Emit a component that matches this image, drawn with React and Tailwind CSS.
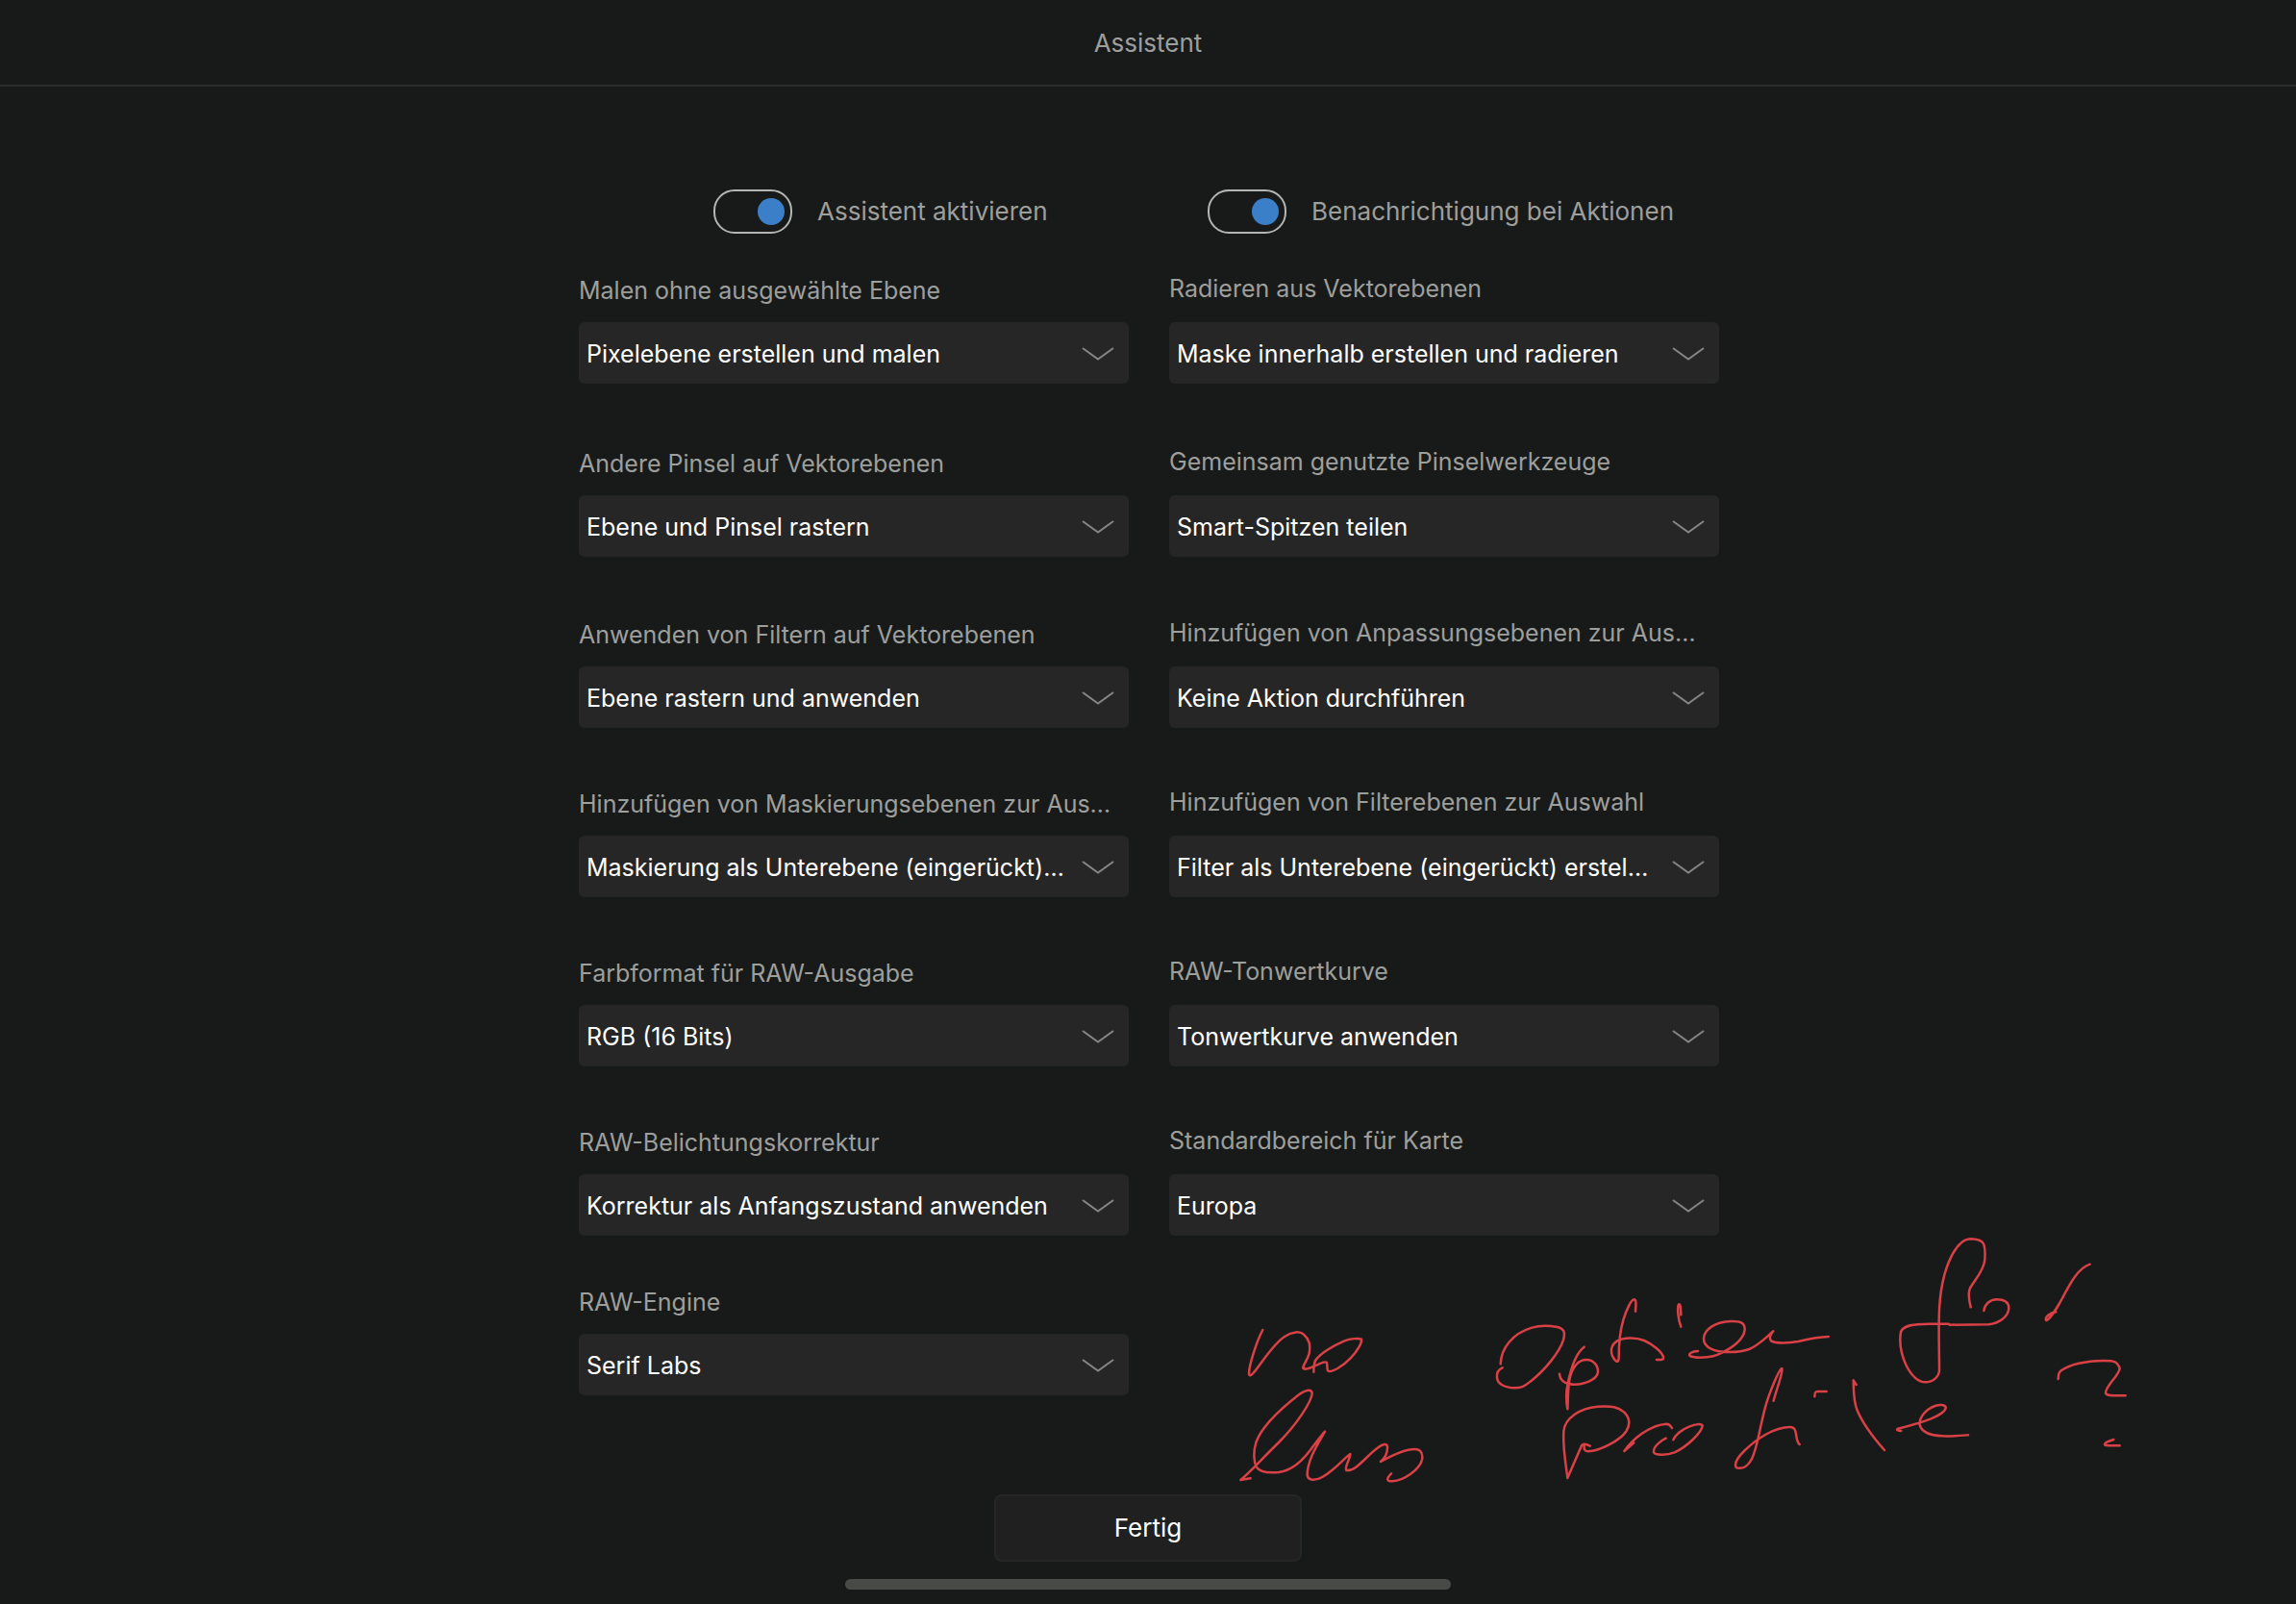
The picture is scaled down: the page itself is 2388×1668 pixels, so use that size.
import React, { useId } from "react";

const switches = [
  { label: "Assistent aktivieren", inset: "pl-[140px]" },
  { label: "Benachrichtigung bei Aktionen", inset: "pl-10" },
];

const rows = [
  {
    space: "mt-10",
    fields: [
      ["Malen ohne ausgewählte Ebene", "Pixelebene erstellen und malen"],
      ["Radieren aus Vektorebenen", "Maske innerhalb erstellen und radieren"],
    ],
  },
  {
    space: "mt-16",
    fields: [
      ["Andere Pinsel auf Vektorebenen", "Ebene und Pinsel rastern"],
      ["Gemeinsam genutzte Pinselwerkzeuge", "Smart-Spitzen teilen"],
    ],
  },
  {
    space: "mt-[62px]",
    fields: [
      ["Anwenden von Filtern auf Vektorebenen", "Ebene rastern und anwenden"],
      ["Hinzufügen von Anpassungsebenen zur Aus…", "Keine Aktion durchführen"],
    ],
  },
  {
    space: "mt-15",
    fields: [
      ["Hinzufügen von Maskierungsebenen zur Aus…", "Maskierung als Unterebene (eingerückt)…"],
      ["Hinzufügen von Filterebenen zur Auswahl", "Filter als Unterebene (eingerückt) erstel…"],
    ],
  },
  {
    space: "mt-15",
    fields: [
      ["Farbformat für RAW-Ausgabe", "RGB (16 Bits)"],
      ["RAW-Tonwertkurve", "Tonwertkurve anwenden"],
    ],
  },
  {
    space: "mt-15",
    fields: [
      ["RAW-Belichtungskorrektur", "Korrektur als Anfangszustand anwenden"],
      ["Standardbereich für Karte", "Europa"],
    ],
  },
  {
    space: "mt-[50px]",
    fields: [["RAW-Engine", "Serif Labs"]],
  },
];

function Switch({ label, inset }) {
  const id = useId();
  return (
    <div className={`flex items-center gap-[26px] ${inset}`}>
      <input
        id={id}
        type="checkbox"
        role="switch"
        defaultChecked
        className="flex h-[46px] w-[82px] shrink-0 appearance-none items-center rounded-[22px] border-2 border-[#b4b5b4] px-1.5 before:block before:size-7 before:rounded-full before:bg-[#6b6c6b] checked:justify-end checked:before:bg-[#3a7fc8]"
      />
      <label htmlFor={id} className="whitespace-nowrap">
        {label}
      </label>
    </div>
  );
}

function Field({ label, value, labelSpace }) {
  const id = useId();
  return (
    <div className="flex min-w-0 flex-col text-[25px]">
      <label htmlFor={id} className={`h-[52px] whitespace-nowrap ${labelSpace}`}>
        {label}
      </label>
      <div className="grid items-center">
        <select
          id={id}
          defaultValue={value}
          className="col-start-1 row-start-1 h-16 w-full appearance-none rounded-md bg-[#262626] pt-0.5 pr-12 pl-2 text-white"
        >
          <option value={value}>{value}</option>
        </select>
        <svg
          viewBox="0 0 36 16"
          className="pointer-events-none col-start-1 row-start-1 mr-3.5 h-4 w-9 justify-self-end"
          fill="none"
          stroke="#868686"
          strokeWidth="2"
          aria-hidden="true"
        >
          <path d="M2 3 L18 14.500 L34 3" />
        </svg>
      </div>
    </div>
  );
}

function Handwriting() {
  return (
    <svg
      viewBox="1280 1270 940 290"
      className="pointer-events-none absolute top-[1270px] left-1/2 ml-[86px] h-[290px] w-[940px]"
      fill="none"
      stroke="#d94146"
      strokeWidth="7.500"
      strokeLinecap="round"
      strokeLinejoin="round"
      aria-hidden="true"
    >
      <g transform="translate(1270 1270) scale(0.33333)">
        <path d="M130 339C112 372 88 446 87 474C87 484 93 482 100 474C125 446 160 385 198 360C222 344 246 342 258 353C276 368 280 388 275 412C270 434 256 446 256 458C262 466 280 456 300 448C313 442 324 436 329 440C333 448 329 463 334 467C346 472 378 454 404 427C428 402 440 378 438 368C428 364 403 366 385 373C350 388 308 413 294 435C289 446 289 456 289 470" />
        <path d="M92 802L61 807C90 784 130 738 180 690C235 635 285 560 284 535C281 522 262 526 240 543C180 590 125 645 109 690C100 720 102 750 110 766C120 782 150 786 180 783C220 778 255 745 279 713C300 685 315 665 324 656C306 688 268 745 269 792C271 808 288 808 305 803C345 788 380 742 403 726C404 740 384 765 391 777C420 782 450 735 490 706C505 694 517 692 519 703C520 725 512 738 498 750C530 732 575 711 605 711C625 711 630 728 627 744C620 775 570 808 535 811C512 812 518 800 531 787" />
      </g>
      <g transform="translate(1540 1330) scale(0.33333)">
        <path d="M62 265C64 215 100 170 160 152C185 144 215 145 240 150C262 156 264 168 258 190C245 230 200 285 155 320C135 337 125 340 105 340C75 339 52 327 51 308C49 292 56 282 68 277" />
        <path d="M323 212C295 232 280 285 271 330C265 360 268 390 271 406C273 380 271 350 277 315C285 275 305 252 330 252C352 252 367 270 366 290C364 313 325 330 290 329C262 328 247 315 246 296" />
        <path d="M483 101C484 85 487 65 479 64C470 64 455 95 445 128C434 165 431 210 431 245C431 263 422 259 414 246C402 225 408 205 425 194C445 182 485 182 510 192C540 205 565 228 570 243C571 254 562 252 549 252" />
        <path d="M625 149C617 130 612 90 618 79C624 76 624 95 625 112" />
        <path d="M678 225C660 226 647 233 653 240C670 248 715 246 740 236C785 217 822 188 824 158C825 135 808 131 780 132C735 133 697 156 696 186C696 215 730 228 775 228C800 228 820 226 838 219C870 205 890 182 913 163C903 172 900 185 906 193C920 202 965 200 990 195C1025 187 1050 181 1085 180" />
        <path d="M341 521C325 512 316 514 313 524L271 621C265 570 256 530 259 475C262 435 310 402 365 398C410 395 430 400 448 416C466 434 466 455 455 474C435 505 370 537 335 538C323 538 322 530 323 519" />
        <path d="M478 511L448 537C475 498 530 455 580 452C591 453 592 458 597 465" />
        <path d="M578 497C560 505 537 525 540 541C545 550 580 551 605 541C645 523 690 478 692 458C690 450 670 453 652 460C628 469 607 487 601 502" />
        <path d="M914 380C922 345 945 290 940 279C932 280 900 355 888 400C868 475 860 545 842 568C830 588 812 593 798 589C790 578 800 558 825 534C860 500 915 462 965 462C982 462 982 475 985 490C987 505 990 512 995 516" />
        <path d="M1042 367C1042 355 1044 351 1051 351L1079 351" />
      </g>
      <g transform="translate(1900 1270) scale(0.33333)">
        <path d="M449 268C444 248 439 225 447 209C460 185 490 155 493 120C494 105 494 85 490 72C483 57 465 55 447 55C425 56 405 78 390 107C360 165 351 230 350 305C349 370 351 420 351 465C350 485 332 502 308 502C285 502 265 483 248 450C230 412 226 375 231 345C238 325 270 320 320 320L380 320L383 323L505 322C535 318 567 300 568 270C567 250 552 244 530 244C510 244 493 258 490 279" />
        <path d="M715 283C695 285 680 300 684 309C690 312 712 280 725 258C750 215 775 150 821 134" />
        <path d="M722 492C723 478 723 472 732 465C765 443 815 436 865 435C895 435 905 436 914 458C914 480 868 515 870 536C874 546 895 544 932 544" />
        <path d="M895 681C880 686 863 692 868 698C880 701 895 700 914 700" />
        <path d="M92 510L83 496C84 520 82 560 95 590C112 630 150 680 180 714" />
        <path d="M232 654C222 653 215 650 222 647C250 640 290 630 325 616C355 603 372 590 371 580C368 571 350 572 338 576C310 586 288 610 290 635C295 655 315 668 360 670C390 671 415 669 441 667" />
      </g>
    </svg>
  );
}

export default function App() {
  return (
    <div className="relative flex min-h-screen flex-col overflow-x-hidden bg-[#181a19] font-['Inter',sans-serif] text-[26px] leading-8 text-[#9d9f9d]">
      <header className="flex h-[90px] items-center justify-center border-b-2 border-[#2a2c2b] pt-0.5">
        <h1>Assistent</h1>
      </header>

      <main className="mx-auto w-full max-w-[1188px] pt-[107px] pl-0.5">
        <div className="grid grid-cols-2 gap-x-[42px]">
          {switches.map((item) => (
            <Switch key={item.label} {...item} />
          ))}
        </div>
        {rows.map((row) => (
          <div
            key={row.fields[0][0]}
            className={`grid grid-cols-2 gap-x-[42px] ${row.space}`}
          >
            {row.fields.map(([label, value], column) => (
              <Field
                key={label}
                label={label}
                value={value}
                labelSpace={column === 0 ? "pt-[3px]" : "pt-px"}
              />
            ))}
          </div>
        ))}
      </main>

      <footer className="mt-[103px] flex flex-col items-center gap-[18px] pb-[15px]">
        <button
          type="button"
          className="h-[70px] w-80 rounded-lg border-2 border-[#262626] bg-[#202020] text-white"
        >
          Fertig
        </button>
        <div className="h-[11px] w-[630px] rounded-full bg-[#484a48]" />
      </footer>

      <Handwriting />
    </div>
  );
}
